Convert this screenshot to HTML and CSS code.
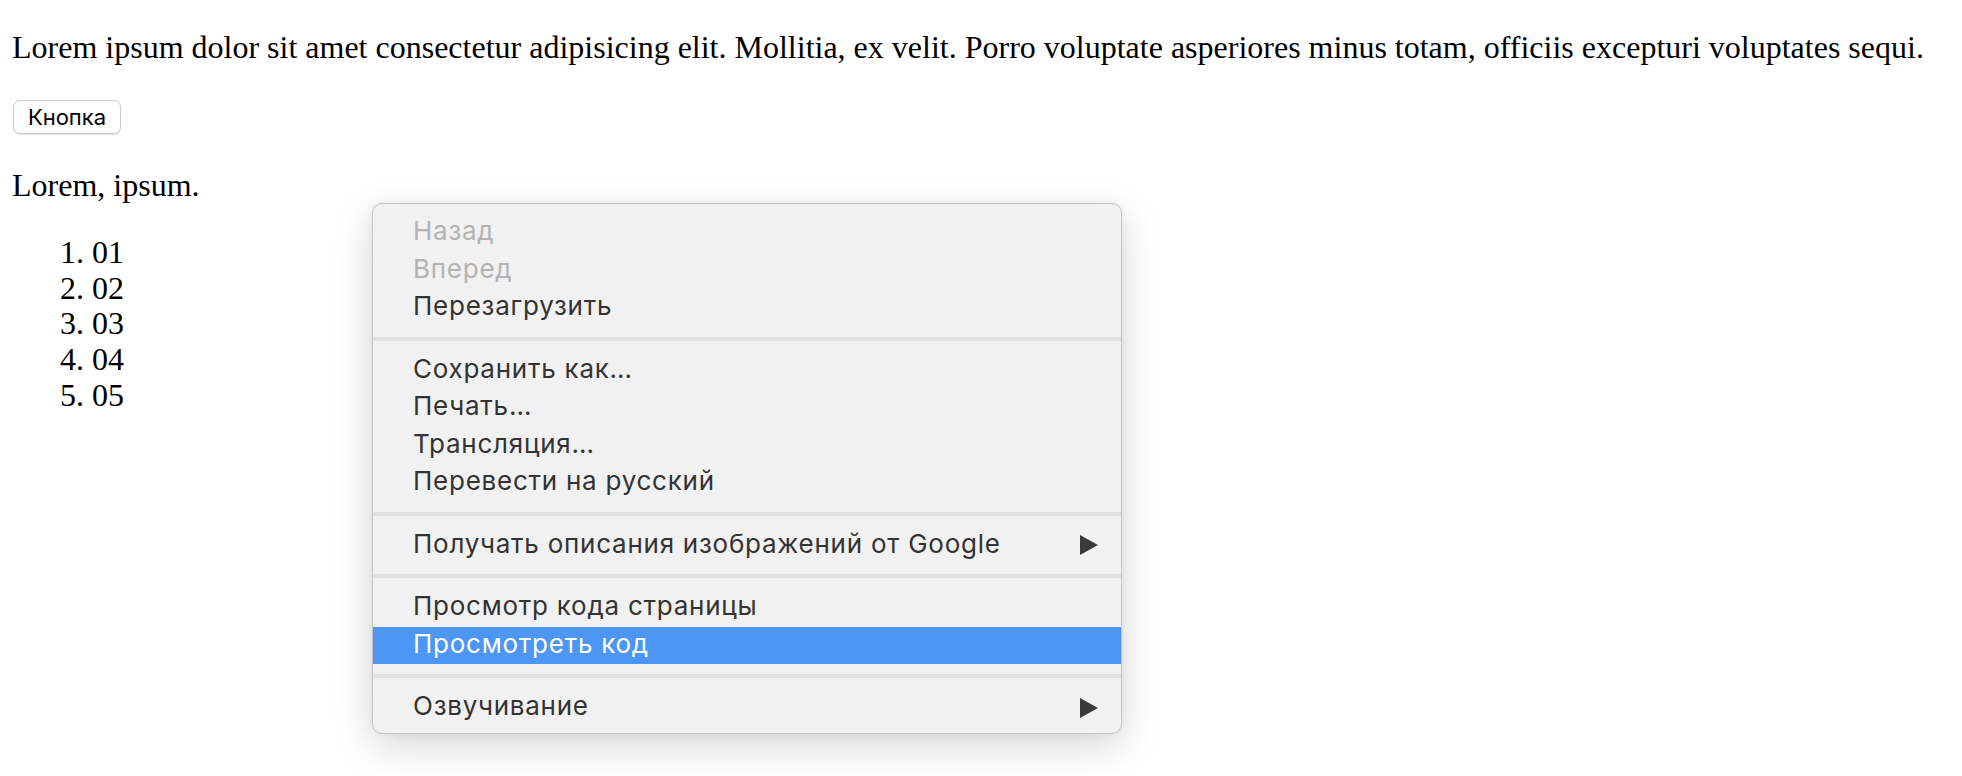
FILE: index.html
```html
<!DOCTYPE html>
<html lang="ru">
<head>
<meta charset="utf-8">
<title>Context menu</title>
<link rel="stylesheet" href="styles.css">
</head>
<body>
  <p class="lead">Lorem ipsum dolor sit amet consectetur adipisicing elit. Mollitia, ex velit. Porro voluptate asperiores minus totam, officiis excepturi voluptates sequi.</p>
  <div class="btn-row"><button class="btn">Кнопка</button></div>
  <p class="sub">Lorem, ipsum.</p>
  <ol class="list">
    <li>01</li>
    <li>02</li>
    <li>03</li>
    <li>04</li>
    <li>05</li>
  </ol>

  <div class="menu">
    <div class="item disabled">Назад</div>
    <div class="item disabled">Вперед</div>
    <div class="item">Перезагрузить</div>
    <div class="sep"></div>
    <div class="item">Сохранить как…</div>
    <div class="item">Печать…</div>
    <div class="item">Трансляция…</div>
    <div class="item">Перевести на русский</div>
    <div class="sep"></div>
    <div class="item">Получать описания изображений от Google<svg class="arrow" viewBox="0 0 18 20" width="18" height="20"><polygon points="0,0 18,10 0,20"/></svg></div>
    <div class="sep"></div>
    <div class="item">Просмотр кода страницы</div>
    <div class="item active">Просмотреть код</div>
    <div class="sep"></div>
    <div class="item">Озвучивание<svg class="arrow" viewBox="0 0 18 20" width="18" height="20"><polygon points="0,0 18,10 0,20"/></svg></div>
  </div>
</body>
</html>
```

FILE: styles.css
```css
html {
  margin: 0;
  padding: 0;
  background: #ffffff;
}

body {
  margin: 0;
  padding: 0 0 0 12px;
  font-family: "Liberation Serif", "Times New Roman", serif;
  font-size: 32px;
  color: #000000;
}

.lead {
  margin: 29px 0 0;
  line-height: 36px;
  white-space: nowrap;
}

.btn-row {
  margin-top: 35px;
  display: flex;
}

.btn {
  width: 108px;
  height: 34px;
  margin-left: 1px;
  padding: 0;
  border: 1px solid #cdcdcd;
  border-radius: 7px;
  background: #ffffff;
  box-shadow: 0 1px 1px rgba(0, 0, 0, 0.12);
  font-family: Inter, "Liberation Sans", Arial, sans-serif;
  font-size: 22px;
  line-height: 32px;
  color: #000000;
}

.sub {
  margin: 33px 0 0;
  line-height: 36px;
}

.list {
  margin: 32px 0 0;
  padding-left: 80px;
}

.list li {
  line-height: 35.7px;
}

.menu {
  position: absolute;
  left: 372px;
  top: 203px;
  width: 750px;
  box-sizing: border-box;
  padding: 10px 0 6px;
  background: #f1f1f1;
  border: 1px solid #c4c4c4;
  border-radius: 10px;
  box-shadow: 0 12px 40px rgba(0, 0, 0, 0.16), 0 0 10px rgba(0, 0, 0, 0.06);
  font-family: Inter, "Liberation Sans", Arial, sans-serif;
  font-size: 26px;
  color: #333333;
}

.item {
  display: flex;
  align-items: center;
  height: 37.5px;
  box-sizing: border-box;
  padding: 0 23px 3px 40px;
  line-height: 34.5px;
  letter-spacing: 0.75px;
  white-space: nowrap;
}

.item.disabled {
  color: #b3b3b3;
}

.item.active {
  background: #4c96f5;
  color: #ffffff;
}

.arrow {
  margin-left: auto;
  margin-top: 3px;
  fill: #3a3a3a;
}

.sep {
  height: 4px;
  margin: 10px 0 11px;
  background: #e1e1e1;
}
```
